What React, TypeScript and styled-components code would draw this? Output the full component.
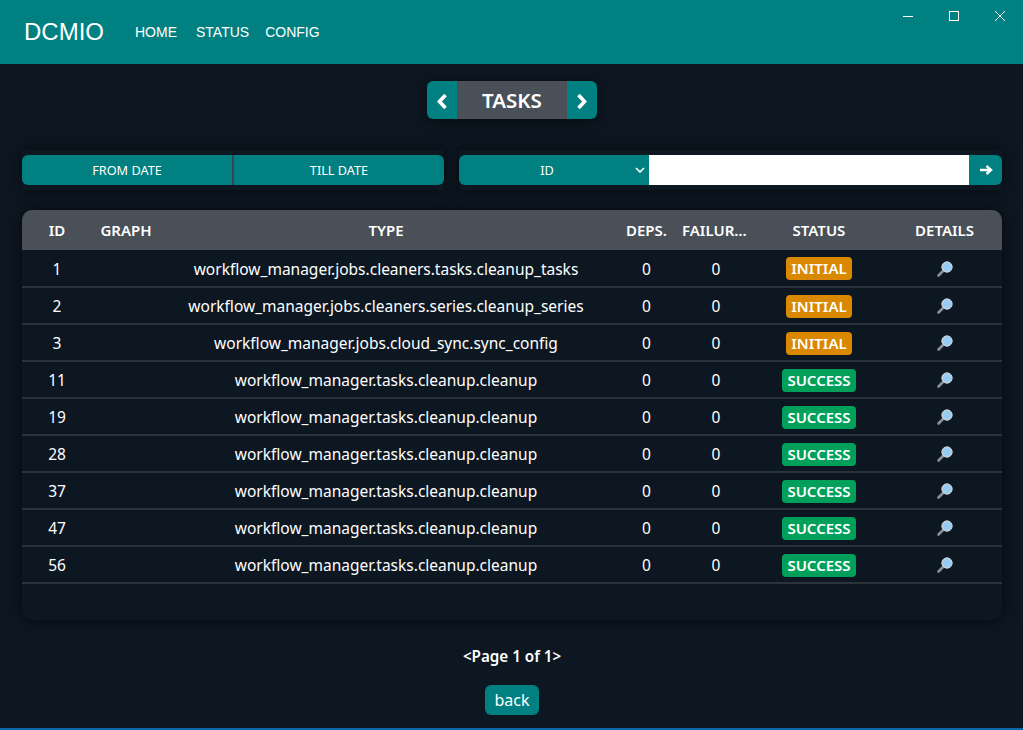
import React from "react";
import styled, { createGlobalStyle } from "styled-components";

const TEAL = "#008080";
const BG = "#0d1722";
const BODY_FONT = '"Noto Sans", "Liberation Sans", sans-serif';

const GlobalStyle = createGlobalStyle`
  html, body {
    margin: 0;
    height: 100%;
    background: ${BG};
    overflow: hidden;
  }
  * {
    box-sizing: border-box;
  }
`;

const Page = styled.div`
  width: 1023px;
  height: 730px;
  display: flex;
  flex-direction: column;
  color: #fff;
  font-family: ${BODY_FONT};
  border-bottom: 2px solid #0a66ad;
`;

const Header = styled.header`
  height: 64px;
  flex: none;
  background: ${TEAL};
  display: flex;
  align-items: center;
  padding-left: 24px;
  position: relative;
  font-family: "Liberation Sans", Arial, sans-serif;
`;

const Brand = styled.div`
  font-size: 24px;
  margin-right: 31px;
`;

const Nav = styled.nav`
  display: flex;
  gap: 16px;
  font-size: 14px;

  a:first-child {
    margin-right: 3px;
  }
`;

const NavLink = styled.a`
  color: #fff;
`;

const WindowControls = styled.div`
  position: absolute;
  top: 8px;
  right: 0;
  display: flex;
`;

const WindowButton = styled.div`
  width: 46px;
  height: 16px;
  display: flex;
  align-items: center;
  justify-content: center;
`;

const Main = styled.main`
  flex: 1;
  padding: 17px 21px 0 22px;
  display: flex;
  flex-direction: column;
  align-items: stretch;
`;

const TitleBar = styled.div`
  align-self: center;
  display: flex;
  height: 38px;
  width: 170px;
  border-radius: 6px;
  overflow: hidden;
  box-shadow: 0 2px 14px rgba(0, 0, 0, 0.6);
`;

const TitleArrow = styled.div`
  width: 30px;
  padding-top: 2px;
  background: ${TEAL};
  display: flex;
  align-items: center;
  justify-content: center;
`;

const Title = styled.div`
  flex: 1;
  background: #495057;
  display: flex;
  align-items: center;
  justify-content: center;
  font-size: 20.5px;
  font-weight: 600;
`;

const Filters = styled.div`
  display: flex;
  gap: 15px;
  margin-top: 31px;
`;

const FilterGroup = styled.div<{ $width: number }>`
  width: ${(p) => p.$width}px;
  display: flex;
  padding: 5px 0;
  box-shadow: 0 0 14px rgba(0, 0, 0, 0.65);
  background: ${BG};
`;

const DateButton = styled.button`
  flex: 1;
  height: 30px;
  border: 0;
  background: ${TEAL};
  color: #fff;
  font-family: ${BODY_FONT};
  font-size: 12.7px;
  padding: 0;

  &:first-child {
    flex: 0 0 212px;
    border-radius: 6px 0 0 6px;
    border-right: 2px solid #3a4550;
  }
  &:last-child {
    border-radius: 0 6px 6px 0;
  }
`;

const SelectWrap = styled.div`
  position: relative;
  width: 190px;
  height: 30px;
  background: ${TEAL};
  border-radius: 6px 0 0 6px;
`;

const Select = styled.select`
  width: 100%;
  height: 100%;
  appearance: none;
  border: 0;
  background: transparent;
  color: #fff;
  font-family: ${BODY_FONT};
  font-size: 12.7px;
  text-align: center;
  padding: 0 14px 0 0;
`;

const SelectChevron = styled.svg`
  position: absolute;
  right: 4px;
  top: 12px;
  pointer-events: none;
`;

const SearchInput = styled.input`
  flex: 1;
  min-width: 0;
  height: 30px;
  border: 0;
  background: #fff;
  padding: 0 8px;
`;

const GoButton = styled.button`
  width: 33px;
  height: 30px;
  border: 0;
  background: ${TEAL};
  border-radius: 0 6px 6px 0;
  display: flex;
  align-items: center;
  justify-content: center;
  padding: 0;
`;

const TableCard = styled.div`
  margin-top: 20px;
  height: 410px;
  background: ${BG};
  border-radius: 10px;
  overflow: hidden;
  box-shadow: 0 0 14px rgba(0, 0, 0, 0.65);
`;

const COLUMNS = "70px 68px 452px 69px 70px 136px 115px";

const HeadRow = styled.div`
  display: grid;
  grid-template-columns: ${COLUMNS};
  height: 40px;
  align-items: center;
  background: #495057;
  font-size: 15px;
  font-weight: 600;
  text-align: center;
`;

const HeadCell = styled.div`
  padding: 0 1px;
  white-space: nowrap;
  overflow: hidden;
  text-overflow: ellipsis;
`;

const RowList = styled.div`
  padding-top: 1px;
`;

const StatusCell = styled.div`
  display: flex;
  justify-content: center;
  padding-top: 2px;
`;

const Row = styled.div`
  display: grid;
  grid-template-columns: ${COLUMNS};
  height: 37px;
  align-items: center;
  text-align: center;
  font-size: 15.5px;
  border-bottom: 2px solid #2a323c;

  &:first-child ${StatusCell} {
    padding-top: 0;
  }
`;

const IconCell = styled.div`
  display: flex;
  justify-content: center;
`;

const Badge = styled.span<{ $status: "INITIAL" | "SUCCESS" }>`
  padding: 0 5px;
  height: 23px;
  line-height: 23px;
  border-radius: 4px;
  font-size: 15px;
  font-weight: 600;
  background: ${(p) => (p.$status === "INITIAL" ? "#d98800" : "#00a05a")};
`;

const Pager = styled.div`
  margin-top: 26px;
  text-align: center;
  font-size: 15.2px;
  font-weight: 600;
`;

const BackButton = styled.button`
  align-self: center;
  margin-top: 19px;
  width: 54px;
  height: 30px;
  border: 0;
  border-radius: 6px;
  background: ${TEAL};
  color: #fff;
  font-family: ${BODY_FONT};
  font-size: 16px;
  padding: 0;
`;

const MagnifierIcon = () => (
  <svg width="18" height="18" viewBox="0 0 18 18">
    <line x1="2.5" y1="15.5" x2="8" y2="10" stroke="#8a9196" strokeWidth="2.6" strokeLinecap="round" />
    <circle cx="11" cy="7" r="5.2" fill="#a9d3f0" stroke="#c8ccd0" strokeWidth="1" />
    <circle cx="11" cy="7" r="3.8" fill="#97cbf2" />
  </svg>
);

const Chevron = ({ dir }: { dir: "left" | "right" }) => (
  <svg width="12" height="17" viewBox="0 0 12 17">
    <path
      d={dir === "left" ? "M9.5 2 L3.5 8.5 L9.5 15" : "M2.5 2 L8.5 8.5 L2.5 15"}
      fill="none"
      stroke="#fff"
      strokeWidth="3.6"
    />
  </svg>
);

const rows: { id: number; type: string; status: "INITIAL" | "SUCCESS" }[] = [
  { id: 1, type: "workflow_manager.jobs.cleaners.tasks.cleanup_tasks", status: "INITIAL" },
  { id: 2, type: "workflow_manager.jobs.cleaners.series.cleanup_series", status: "INITIAL" },
  { id: 3, type: "workflow_manager.jobs.cloud_sync.sync_config", status: "INITIAL" },
  { id: 11, type: "workflow_manager.tasks.cleanup.cleanup", status: "SUCCESS" },
  { id: 19, type: "workflow_manager.tasks.cleanup.cleanup", status: "SUCCESS" },
  { id: 28, type: "workflow_manager.tasks.cleanup.cleanup", status: "SUCCESS" },
  { id: 37, type: "workflow_manager.tasks.cleanup.cleanup", status: "SUCCESS" },
  { id: 47, type: "workflow_manager.tasks.cleanup.cleanup", status: "SUCCESS" },
  { id: 56, type: "workflow_manager.tasks.cleanup.cleanup", status: "SUCCESS" },
];

const App: React.FC = () => (
  <Page>
    <GlobalStyle />
    <Header>
      <Brand>DCMIO</Brand>
      <Nav>
        <NavLink>HOME</NavLink>
        <NavLink>STATUS</NavLink>
        <NavLink>CONFIG</NavLink>
      </Nav>
      <WindowControls>
        <WindowButton>
          <svg width="10" height="10" viewBox="0 0 10 10">
            <line x1="0" y1="5.5" x2="10" y2="5.5" stroke="#fff" />
          </svg>
        </WindowButton>
        <WindowButton>
          <svg width="10" height="10" viewBox="0 0 10 10">
            <rect x="0.5" y="0.5" width="9" height="9" fill="none" stroke="#fff" />
          </svg>
        </WindowButton>
        <WindowButton>
          <svg width="10" height="10" viewBox="0 0 10 10">
            <path d="M0 0 L10 10 M10 0 L0 10" stroke="#fff" />
          </svg>
        </WindowButton>
      </WindowControls>
    </Header>
    <Main>
      <TitleBar>
        <TitleArrow>
          <Chevron dir="left" />
        </TitleArrow>
        <Title>TASKS</Title>
        <TitleArrow>
          <Chevron dir="right" />
        </TitleArrow>
      </TitleBar>
      <Filters>
        <FilterGroup $width={422}>
          <DateButton>FROM DATE</DateButton>
          <DateButton>TILL DATE</DateButton>
        </FilterGroup>
        <FilterGroup $width={543}>
          <SelectWrap>
            <Select defaultValue="ID">
              <option>ID</option>
            </Select>
            <SelectChevron width="10" height="6" viewBox="0 0 10 6">
              <path d="M1 1 L5 5 L9 1" fill="none" stroke="#fff" strokeWidth="1.6" />
            </SelectChevron>
          </SelectWrap>
          <SearchInput />
          <GoButton>
            <svg width="14" height="12" viewBox="0 0 14 12">
              <path d="M1 6 H11 M7.5 2 L12 6 L7.5 10" fill="none" stroke="#fff" strokeWidth="2.4" />
            </svg>
          </GoButton>
        </FilterGroup>
      </Filters>
      <TableCard>
        <HeadRow>
          <HeadCell>ID</HeadCell>
          <HeadCell>GRAPH</HeadCell>
          <HeadCell>TYPE</HeadCell>
          <HeadCell>DEPS.</HeadCell>
          <HeadCell>FAILURES</HeadCell>
          <HeadCell>STATUS</HeadCell>
          <HeadCell>DETAILS</HeadCell>
        </HeadRow>
        <RowList>
          {rows.map((r) => (
            <Row key={r.id}>
              <div>{r.id}</div>
              <div />
              <div>{r.type}</div>
              <div>0</div>
              <div>0</div>
              <StatusCell>
                <Badge $status={r.status}>{r.status}</Badge>
              </StatusCell>
              <IconCell>
                <MagnifierIcon />
              </IconCell>
            </Row>
          ))}
        </RowList>
      </TableCard>
      <Pager>&lt;Page 1 of 1&gt;</Pager>
      <BackButton>back</BackButton>
    </Main>
  </Page>
);

export default App;
